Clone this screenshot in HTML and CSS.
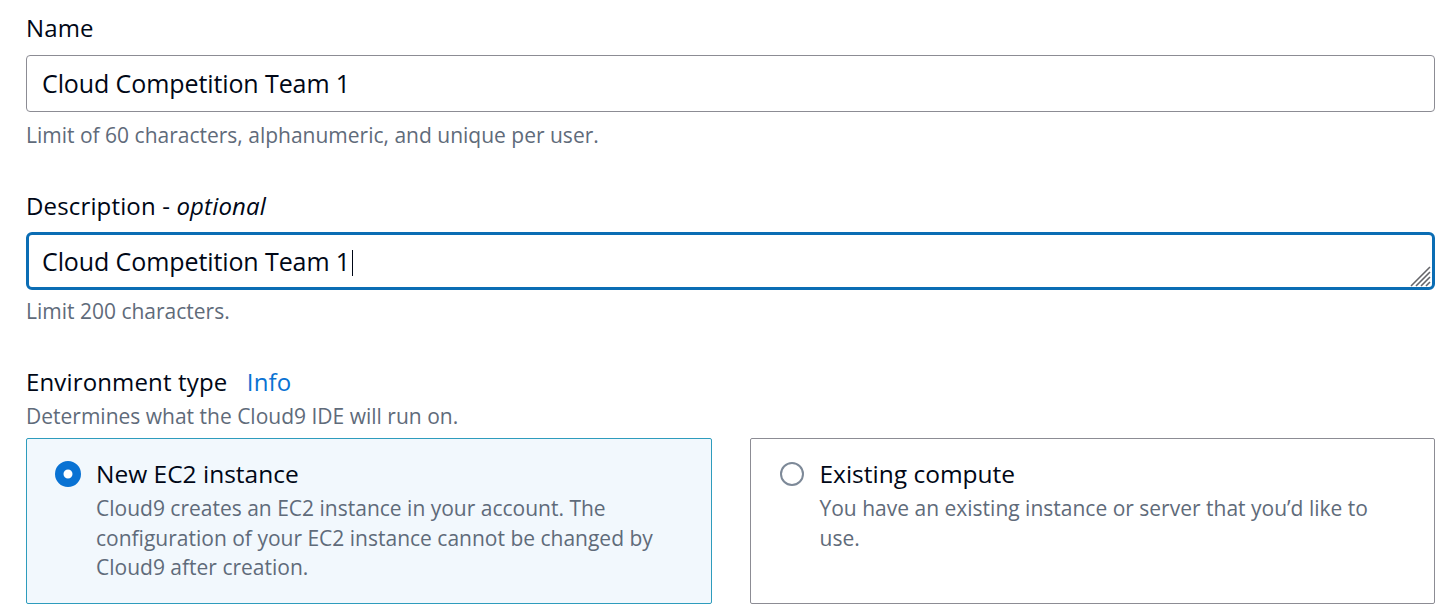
FILE: index.html
```html
<!DOCTYPE html>
<html lang="en">
<head>
<meta charset="utf-8">
<link rel="stylesheet" href="styles.css">
</head>
<body>
<form class="form">
  <div class="field">
    <label class="label">Name</label>
    <div class="input">Cloud Competition Team 1</div>
    <div class="hint">Limit of 60 characters, alphanumeric, and unique per user.</div>
  </div>
  <div class="field">
    <label class="label">Description - <i>optional</i></label>
    <div class="input textarea">Cloud Competition Team 1<span class="caret"></span>
      <svg class="grip" width="24" height="24" viewBox="0 0 24 24"><path d="M22 4 L3 23 M22 9 L8 23 M22 14 L13 23 M22 19 L18 23" stroke="#66666a" stroke-width="1.6" fill="none"/></svg>
    </div>
    <div class="hint hint-tight">Limit 200 characters.</div>
  </div>
  <div class="field">
    <div class="label label-tight">Environment type <a class="info">Info</a></div>
    <div class="hint desc">Determines what the Cloud9 IDE will run on.</div>
    <div class="tiles">
      <div class="tile selected">
        <svg class="radio" width="26" height="26" viewBox="0 0 26 26"><circle cx="13" cy="13" r="8.75" fill="#fff" stroke="#0972d3" stroke-width="8.5"/></svg>
        <div class="tile-body">
          <div class="tile-title">New EC2 instance</div>
          <div class="tile-desc">Cloud9 creates an EC2 instance in your account. The configuration of your EC2 instance cannot be changed by Cloud9 after creation.</div>
        </div>
      </div>
      <div class="tile">
        <svg class="radio" width="26" height="26" viewBox="0 0 26 26"><circle cx="13" cy="13" r="11" fill="#fff" stroke="#7d8998" stroke-width="2"/></svg>
        <div class="tile-body">
          <div class="tile-title">Existing compute</div>
          <div class="tile-desc">You have an existing instance or server that you’d like to use.</div>
        </div>
      </div>
    </div>
  </div>
</form>
</body>
</html>
```

FILE: styles.css
```css
html, body {
  margin: 0;
  padding: 0;
  background: #ffffff;
}
body {
  font-family: "Open Sans", "Noto Sans", sans-serif;
  color: #000716;
}
.form {
  padding: 12px 12px 0 26px;
  display: flex;
  flex-direction: column;
  gap: 40px;
}
.field {
  display: flex;
  flex-direction: column;
}
.label {
  font-size: 24px;
  letter-spacing: 0.15px;
  line-height: 32px;
  color: #000716;
  margin-bottom: 11px;
}
.label i {
  font-style: italic;
}
.label-tight {
  margin-bottom: 3px;
}
.info {
  color: #0972d3;
  margin-left: 13px;
}
.input {
  position: relative;
  height: 57px;
  box-sizing: border-box;
  border: 1px solid #8c8c94;
  border-radius: 4px;
  padding: 0 15px;
  font-size: 25px;
  letter-spacing: -0.1px;
  line-height: 55px;
  color: #000716;
}
.textarea {
  border: 3px solid #0b6db4;
  border-radius: 6px;
  padding: 0 13px;
  line-height: 52px;
  height: 58px;
  margin-top: -1px;
}
.caret {
  display: inline-block;
  width: 1px;
  height: 26px;
  background: #000716;
  vertical-align: -5px;
  margin-left: 2px;
}
.grip {
  position: absolute;
  right: 0;
  bottom: 0;
}
.hint {
  font-size: 21px;
  line-height: 30px;
  color: #5f6b7a;
  margin-top: 8px;
}
.hint-tight {
  margin-top: 6px;
}
.desc {
  margin-top: 0;
}
.tiles {
  margin-top: 7px;
  display: grid;
  grid-template-columns: 1fr 1fr;
  gap: 38px;
}
.tile {
  display: flex;
  gap: 15px;
  align-items: flex-start;
  height: 166px;
  box-sizing: border-box;
  border: 1px solid #8c8c94;
  border-radius: 2px;
  padding: 20px 34px 0 28px;
}
.tile.selected {
  background: #f2f8fd;
  border-color: #2e9cbd;
}
.radio {
  flex: none;
  margin-top: 2px;
}
.tile-title {
  font-size: 24.5px;
  line-height: 30px;
  color: #000716;
}
.tile-desc {
  font-size: 21px;
  line-height: 29.5px;
  color: #5f6b7a;
  margin-top: 5px;
}
```
